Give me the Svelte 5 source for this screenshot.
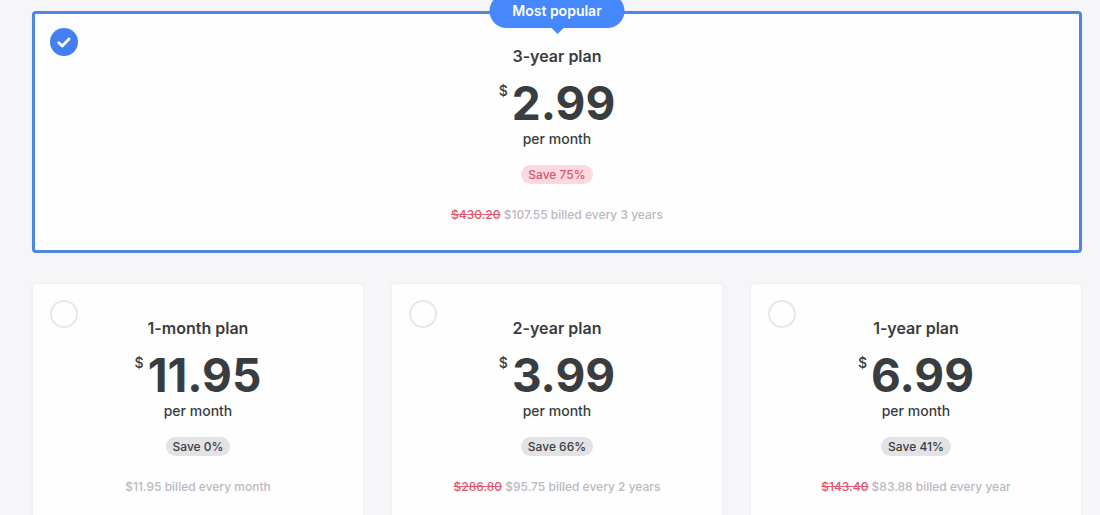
<script>
  const plans = [
    { id: 'y3', name: '3-year plan', price: '2.99', save: 'Save 75%', old: '$430.20', billed: '$107.55 billed every 3 years', popular: true },
    { id: 'm1', name: '1-month plan', price: '11.95', save: 'Save 0%', old: '', billed: '$11.95 billed every month' },
    { id: 'y2', name: '2-year plan', price: '3.99', save: 'Save 66%', old: '$286.80', billed: '$95.75 billed every 2 years' },
    { id: 'y1', name: '1-year plan', price: '6.99', save: 'Save 41%', old: '$143.40', billed: '$83.88 billed every year' }
  ];
  let selected = $state('y3');
</script>

<main class="plans">
  {#each plans as plan (plan.id)}
    <label class="card" class:wide={plan.popular} class:selected={selected === plan.id} for={plan.id}>
      {#if plan.popular}
        <span class="badge">Most popular</span>
      {/if}
      <input type="radio" name="plan" id={plan.id} value={plan.id} bind:group={selected} />
      <span class="mark">
        {#if selected === plan.id}
          <svg viewBox="0 0 28 28" aria-hidden="true">
            <path d="M8.8 14.8 L12.2 18 L19 11" fill="none" stroke="#fff" stroke-width="2.8" stroke-linecap="round" stroke-linejoin="round" />
          </svg>
        {/if}
      </span>
      <span class="name">{plan.name}</span>
      <span class="price"><span class="currency">$</span><span class="amount">{plan.price}</span></span>
      <span class="per">per month</span>
      <span class="save">{plan.save}</span>
      <span class="billed">
        {#if plan.old}<s>{plan.old}</s>{/if}
        {plan.billed}
      </span>
    </label>
  {/each}
</main>

<style>
  :global(body) {
    margin: 0;
    background: #f6f6f8;
  }
  .plans {
    box-sizing: border-box;
    min-height: 100vh;
    padding: 11px 18px 0 32px;
    display: grid;
    grid-template-columns: repeat(3, 1fr);
    align-content: start;
    gap: 30px 27px;
    font-family: Inter, "Liberation Sans", sans-serif;
    color: #3a3d40;
  }
  .card {
    position: relative;
    box-sizing: border-box;
    display: flex;
    flex-direction: column;
    align-items: center;
    padding: 32px 16px 27px;
    border: 1px solid #f2f2f6;
    border-radius: 4px;
    background: #fefefe;
    box-shadow: 0 0 3px rgba(60, 60, 100, 0.05);
    cursor: pointer;
  }
  .wide {
    grid-column: 1 / -1;
  }
  .selected {
    padding: 30px 14px 25px;
    border: 3px solid #4f86de;
  }
  input {
    position: absolute;
    opacity: 0;
    margin: 0;
  }
  .mark {
    position: absolute;
    top: 16px;
    left: 17px;
    box-sizing: border-box;
    width: 28px;
    height: 28px;
    border: 2px solid #e6e6ef;
    border-radius: 50%;
  }
  .selected .mark {
    top: 14px;
    left: 15px;
    border: 0;
    background: #437ff0;
  }
  .mark svg {
    display: block;
  }
  .badge {
    position: absolute;
    top: -20px;
    left: 50%;
    transform: translateX(-50%);
    box-sizing: border-box;
    width: 135px;
    border-radius: 17px;
    background: #4687fd;
    color: #fff;
    font-size: 14px;
    font-weight: 600;
    line-height: 34px;
    text-align: center;
    white-space: nowrap;
  }
  .badge::after {
    content: "";
    position: absolute;
    top: 100%;
    left: 50%;
    margin-left: -6px;
    border: 6px solid transparent;
    border-top-color: #4687fd;
    border-bottom: 0;
  }
  .name {
    font-size: 16px;
    font-weight: 600;
    line-height: 24px;
  }
  .price {
    display: flex;
    gap: 4px;
    margin-top: 10px;
    line-height: 50px;
  }
  .currency {
    font-size: 14px;
    font-weight: 500;
    line-height: 26px;
  }
  .amount {
    font-size: 46px;
    font-weight: 700;
  }
  .per {
    margin-top: 1px;
    font-size: 14px;
    font-weight: 500;
    line-height: 20px;
  }
  .save {
    margin-top: 16px;
    padding: 0 7px;
    border-radius: 10px;
    background: #e3e2e6;
    font-size: 12px;
    font-weight: 500;
    line-height: 19px;
  }
  .wide .save {
    background: #fcd9df;
    color: #d4566f;
  }
  .billed {
    margin-top: 21px;
    color: #bab9c0;
    font-size: 12px;
    font-weight: 500;
    line-height: 20px;
  }
  s {
    color: #e0586f;
  }
</style>
